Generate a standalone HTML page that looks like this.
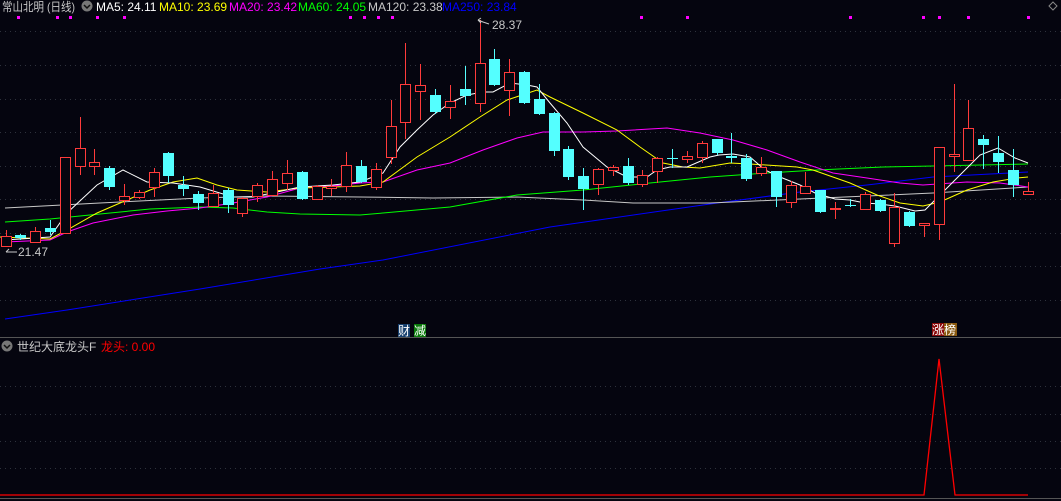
<!DOCTYPE html>
<html><head><meta charset="utf-8"><style>
html,body{margin:0;padding:0;background:#05050f;width:1061px;height:501px;overflow:hidden}
svg{display:block}
text{font-family:"Liberation Sans","Noto Sans CJK SC",sans-serif;font-size:12px}
</style></head><body>
<svg width="1061" height="501" viewBox="0 0 1061 501" xmlns="http://www.w3.org/2000/svg">
<g stroke="#2e323c" stroke-dasharray="1,4" stroke-width="1">
<line x1="0" y1="31.5" x2="1061" y2="31.5"/><line x1="0" y1="65.5" x2="1061" y2="65.5"/>
<line x1="0" y1="99.5" x2="1061" y2="99.5"/><line x1="0" y1="132.5" x2="1061" y2="132.5"/>
<line x1="0" y1="166.5" x2="1061" y2="166.5"/><line x1="0" y1="199.5" x2="1061" y2="199.5"/>
<line x1="0" y1="233.5" x2="1061" y2="233.5"/><line x1="0" y1="266.5" x2="1061" y2="266.5"/>
<line x1="0" y1="300.5" x2="1061" y2="300.5"/>
<line x1="0" y1="386.5" x2="1061" y2="386.5"/><line x1="0" y1="414.5" x2="1061" y2="414.5"/>
<line x1="0" y1="441.5" x2="1061" y2="441.5"/><line x1="0" y1="468.5" x2="1061" y2="468.5"/>
</g>
<line x1="0" y1="337.5" x2="1061" y2="337.5" stroke="#555" stroke-width="1"/>
<line x1="0" y1="498.5" x2="1061" y2="498.5" stroke="#555" stroke-width="1"/>

<!-- header -->
<text x="2" y="11" fill="#c8c8c8" textLength="73" lengthAdjust="spacingAndGlyphs">常山北明 (日线)</text>
<circle cx="87" cy="6" r="5.5" fill="#777"/><path d="M84 5 L87 8 L90 5" stroke="#111" stroke-width="1.5" fill="none"/>
<text x="96" y="11" fill="#ffffff">MA5: 24.11</text>
<text x="159" y="11" fill="#ffff00">MA10: 23.69</text>
<text x="229" y="11" fill="#ff00ff">MA20: 23.42</text>
<text x="298" y="11" fill="#00ff00">MA60: 24.05</text>
<text x="368" y="11" fill="#c8c8c8">MA120: 23.38</text>
<text x="442" y="11" fill="#0000ff">MA250: 23.84</text>
<path d="M1053 2 L1057 6 L1053 10 L1049 6 Z" fill="none" stroke="#888"/>
<g fill="#ff00ff">
<rect x="17" y="16" width="3" height="3"/><rect x="56" y="16" width="3" height="3"/><rect x="69" y="16" width="3" height="3"/>
<rect x="96" y="16" width="3" height="3"/><rect x="123" y="16" width="3" height="3"/><rect x="349" y="16" width="3" height="3"/>
<rect x="363" y="16" width="3" height="3"/><rect x="377" y="16" width="3" height="3"/><rect x="391" y="16" width="3" height="3"/>
<rect x="640" y="16" width="3" height="3"/><rect x="686" y="16" width="3" height="3"/><rect x="849" y="16" width="3" height="3"/>
<rect x="922" y="16" width="3" height="3"/><rect x="938" y="16" width="3" height="3"/><rect x="967" y="16" width="3" height="3"/>
<rect x="1027" y="16" width="3" height="3"/>
</g>

<!-- MAs -->
<g fill="none" stroke-width="1">
<polyline stroke="#0000ff" points="5,319 67,310 200,289 320,269 383,260 550,227 710,204 800,192 867,185 933,177 1028,172"/>
<polyline stroke="#c8c8c8" points="5,208 100,203 200,198 267,196 360,197 433,198 517,197 583,200 633,203 710,203 800,199 867,196 933,193 1028,187"/>
<polyline stroke="#00ff00" points="5,222 50,219 100,214 150,209 200,207 233,208 267,212 300,214 360,215 383,213 450,207 517,195 583,190 650,183 710,177 767,173 817,170 883,167 933,166 1028,164"/>
<polyline stroke="#ff00ff" points="5,242 50,240 67,232 93,223 133,215 167,211 200,208 233,203 267,197 300,188 333,186 360,183 383,182 417,170 450,163 483,150 517,138 543,132 583,132 617,131 667,128 700,133 733,140 767,150 800,162 833,173 867,178 900,183 923,185 967,182 1000,183 1028,187"/>
<polyline stroke="#ffff00" points="0,237 50,239 67,230 97,213 127,200 150,190 173,182 197,178 217,185 237,190 267,192 300,188 333,187 360,186 383,182 417,157 450,137 480,117 507,100 537,90 550,97 583,113 617,130 640,147 663,163 683,167 700,168 730,163 750,164 797,167 813,170 850,183 877,195 900,203 923,206 940,202 967,190 993,182 1017,178 1028,177"/>
<polyline stroke="#ffffff" points="5,240 50,237 67,213 97,185 123,170 147,182 173,183 200,187 233,197 253,197 277,192 300,187 333,185 360,182 383,173 400,147 417,130 433,115 450,103 467,95 483,92 493,92 510,83 527,85 537,87 550,103 567,123 583,147 607,167 627,177 647,177 657,170 670,167 687,167 710,157 719,155 733,154 750,157 765,170 780,177 800,185 815,193 835,199 850,200 865,203 880,204 895,206 915,211 925,210 935,200 950,185 965,170 980,155 998,148 1015,158 1028,163"/>
</g>

<!-- candles -->
<g id="c" stroke-width="1"></g>

<text x="492" y="29" fill="#c8c8c8">28.37</text>
<path d="M478 20 L483 22 L489 24" stroke="#c8c8c8" fill="none"/><path d="M478 20 L481 18 M478 20 L481 23" stroke="#c8c8c8" fill="none"/>
<text x="18" y="256" fill="#c8c8c8">21.47</text>
<path d="M6 252 L17 252 M6 252 L9 249" stroke="#c8c8c8" fill="none"/>

<rect x="398" y="324" width="12" height="13" fill="#17406e"/><text x="398" y="335" fill="#fff">财</text>
<rect x="414" y="324" width="12" height="13" fill="#0a7a0a"/><text x="414" y="335" fill="#fff">减</text>
<rect x="932" y="323" width="12" height="13" fill="#8a0a0a"/><text x="932" y="334" fill="#fff">涨</text>
<rect x="944" y="323" width="13" height="13" fill="#8a5a10"/><text x="944" y="334" fill="#fff">榜</text>

<!-- lower panel -->
<circle cx="7" cy="346" r="5.5" fill="#777"/><path d="M4 345 L7 348 L10 345" stroke="#111" stroke-width="1.5" fill="none"/>
<text x="17" y="351" fill="#c8c8c8">世纪大底龙头F</text>
<text x="101" y="351" fill="#ff0000">龙头: 0.00</text>
<polyline fill="none" stroke="#ff0000" stroke-width="1.3" points="0,495 924,495 939,359 955,495 1028,495"/>
</svg>
<script>
var d=[
[6,'r',236,246,230,246],[20,'c',235,238,234,240],[35,'r',231,242,227,243],[50,'c',228,232,220,235],
[65,'r',157,233,157,233],[80,'r',148,166,117,175],[94,'r',162,166,149,175],[109,'c',168,187,166,190],
[124,'r',196,200,184,205],[139,'r',192,197,190,199],[154,'r',172,187,168,197],[168,'c',153,176,152,183],
[183,'c',185,189,176,196],[198,'c',194,203,191,210],[213,'r',193,206,185,207],[228,'c',190,205,188,213],
[242,'r',198,213,197,217],[257,'r',185,196,183,202],[272,'r',179,195,171,196],[287,'r',173,183,160,190],
[302,'c',172,199,171,200],[317,'r',186,199,185,200],[331,'r',186,188,179,196],[346,'r',165,186,152,192],
[361,'c',166,182,160,183],[376,'r',169,187,163,190],[391,'r',126,157,100,164],[405,'r',84,122,43,139],
[420,'r',85,91,64,120],[435,'c',95,112,89,114],[450,'r',101,107,85,119],[465,'c',89,96,66,105],
[480,'r',63,103,20,112],[494,'c',59,85,49,86],[509,'r',72,90,59,116],[524,'c',72,103,71,104],
[539,'c',99,114,84,115],[554,'c',113,151,112,156],[568,'c',149,177,146,180],[583,'c',176,189,168,210],
[598,'r',169,184,168,195],[613,'r',167,170,165,176],[628,'c',166,183,158,185],[642,'r',175,184,170,187],
[657,'r',158,171,157,183],[672,'c',158,159,149,168],[687,'r',156,159,151,163],[702,'r',143,157,141,163],
[717,'c',139,153,139,155],[731,'c',156,158,133,163],[746,'c',158,179,154,181],[761,'r',167,173,157,176],
[776,'c',171,197,171,207],[791,'r',185,202,181,208],[805,'r',186,193,172,194],[820,'c',190,212,190,213],
[835,'r',208,209,202,219],[850,'c',205,206,199,207],[865,'r',194,209,192,210],[880,'c',200,211,199,212],
[894,'r',207,243,193,247],[909,'c',212,226,211,227],[924,'r',223,225,223,237],[939,'r',147,224,147,240],
[954,'r',154,156,84,172],[968,'r',128,160,100,161],[983,'c',139,145,135,169],[998,'c',153,162,136,173],
[1013,'c',170,185,149,197],[1028,'r',191,194,182,195]];
var s='';d.forEach(function(a){var x=a[0],t=a[2],b=a[3],h=a[4],l=a[5];var col=a[1]=='r'?'#ff3b3b':'#54ffff';
if(a[1]=='r'){s+='<line x1="'+(x+.5)+'" y1="'+h+'" x2="'+(x+.5)+'" y2="'+t+'" stroke="'+col+'"/><line x1="'+(x+.5)+'" y1="'+b+'" x2="'+(x+.5)+'" y2="'+l+'" stroke="'+col+'"/><rect x="'+(x-5+.5)+'" y="'+(t+.5)+'" width="10" height="'+Math.max(b-t,1)+'" fill="#05050f" stroke="'+col+'"/>';}
else{s+='<line x1="'+(x+.5)+'" y1="'+h+'" x2="'+(x+.5)+'" y2="'+l+'" stroke="'+col+'"/><rect x="'+(x-5)+'" y="'+t+'" width="11" height="'+Math.max(b-t,1)+'" fill="'+col+'"/>';}});
document.getElementById('c').innerHTML=s;
</script>
</body></html>
